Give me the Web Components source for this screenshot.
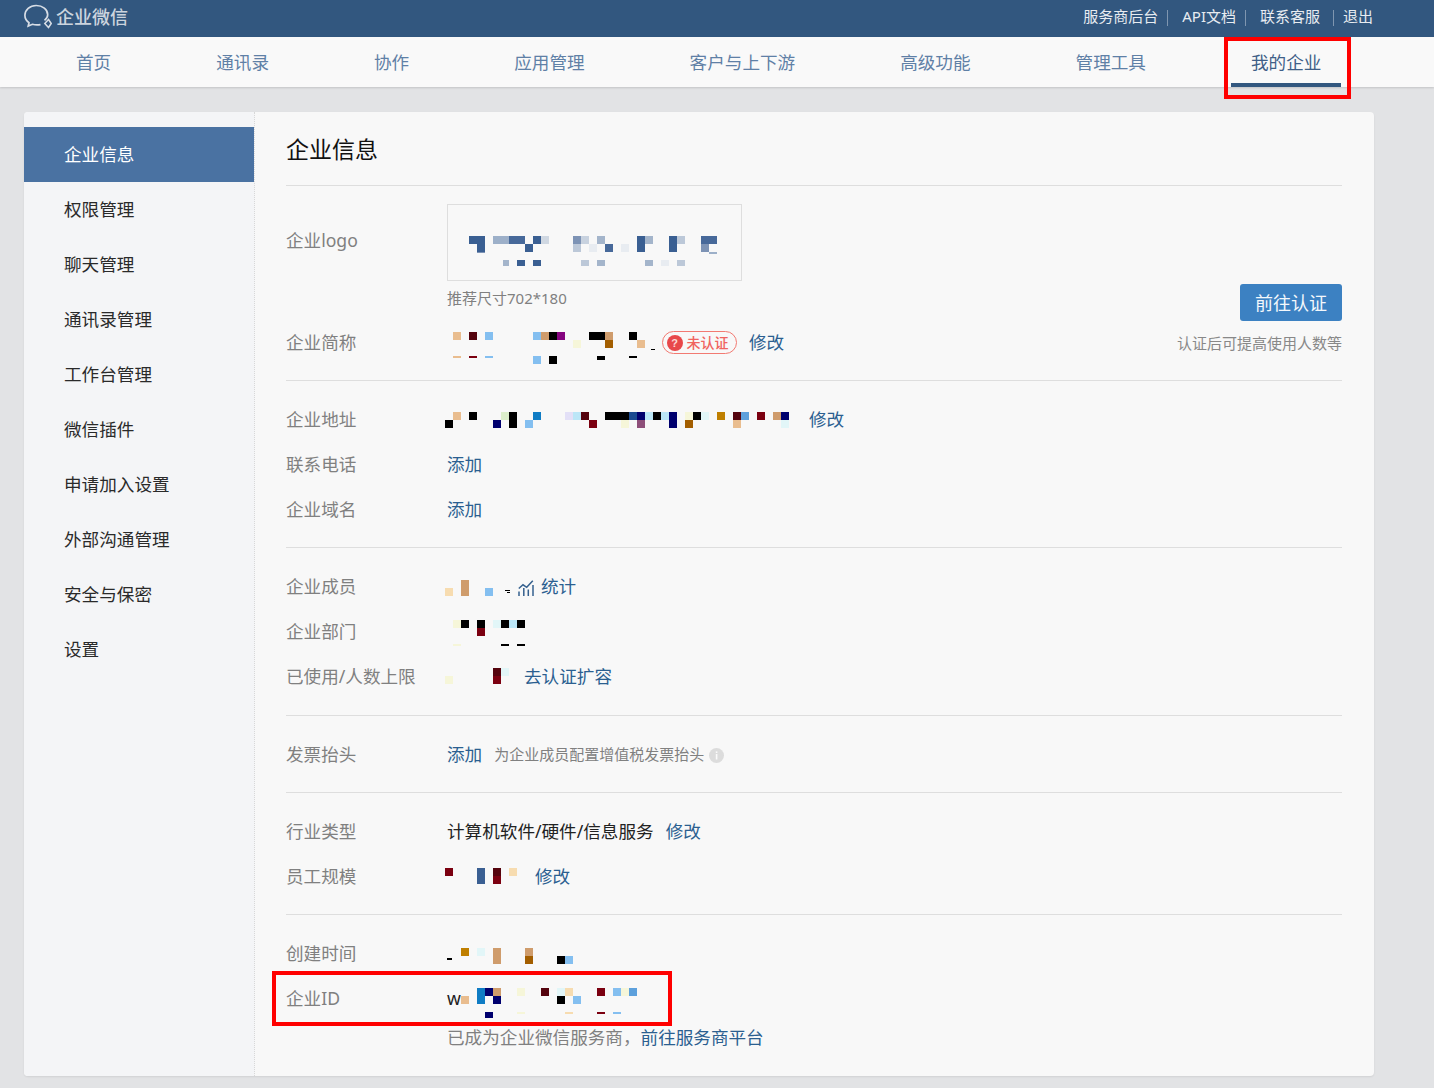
<!DOCTYPE html>
<html lang="zh">
<head>
<meta charset="utf-8">
<title>企业信息</title>
<style>
html,body{margin:0;padding:0}
body{background:#e2e3e5;font-family:"Noto Sans","Noto Sans CJK SC",sans-serif;font-size:17.6px;color:#222;width:1434px;height:1088px;overflow:hidden}
</style>
</head>
<body>
<wx-topbar>
  <span slot="links">服务商后台</span><wx-sep slot="links"></wx-sep>
  <span slot="links">API文档</span><wx-sep slot="links"></wx-sep>
  <span slot="links">联系客服</span><wx-sep slot="links" last></wx-sep>
  <span slot="links">退出</span>
</wx-topbar>
<wx-nav>
  <wx-nav-item>首页</wx-nav-item>
  <wx-nav-item>通讯录</wx-nav-item>
  <wx-nav-item>协作</wx-nav-item>
  <wx-nav-item>应用管理</wx-nav-item>
  <wx-nav-item>客户与上下游</wx-nav-item>
  <wx-nav-item>高级功能</wx-nav-item>
  <wx-nav-item>管理工具</wx-nav-item>
  <wx-nav-item active>我的企业<wx-red-box style="left:-7px;top:0;width:127px;height:62px"></wx-red-box></wx-nav-item>
</wx-nav>
<wx-card>
  <wx-side-item slot="side" active>企业信息</wx-side-item>
  <wx-side-item slot="side">权限管理</wx-side-item>
  <wx-side-item slot="side">聊天管理</wx-side-item>
  <wx-side-item slot="side">通讯录管理</wx-side-item>
  <wx-side-item slot="side">工作台管理</wx-side-item>
  <wx-side-item slot="side">微信插件</wx-side-item>
  <wx-side-item slot="side">申请加入设置</wx-side-item>
  <wx-side-item slot="side">外部沟通管理</wx-side-item>
  <wx-side-item slot="side">安全与保密</wx-side-item>
  <wx-side-item slot="side">设置</wx-side-item>

  <wx-title>企业信息</wx-title>

  <wx-intro>
    <wx-logo-row>
      <wx-mask w="293" h="75" ox="21" cells="0,31,S,2;3,31,G,2;5,31,D,2;8,31,S;9,31,H;13,31,E;14,31,I;16,31,F;21,31,S;22,31,F;25,31,S;26,31,J;29,31,D,2;1,39,S;7,39,S;13,39,J;15,39,K;17,39,D;19,39,K;21,39,S;25,39,S;29,39,E;30,47,G,1,2;1,47,E,1,1;4.3,55,F,.7,6;6,55,S,1,6;8,55,S,1,6;14,55,J,1,6;16,55,F,1,6;22,55,F,1,6;24,55,K,1,6;26,55,J,1,6"></wx-mask>
    </wx-logo-row>
    <wx-row label="企业简称" slot="name">
      <wx-mask w="205" cells="1,12,p;3,12,m;5,12,l;11,12,l;12,12,t;13,12,k;14,12,v;18,12,k,2;20,12,t;23,12,k;16,20,c;20,20,b;24,20,p;1,36,p,1,2;3,36,r,1,2;5,36,l,1,2;11,36,l;13,36,k;19,36,k,1,4;23,36,k,1,2;25.7,29,k,.6,1"></wx-mask>
      <wx-badge>未认证</wx-badge>
      <wx-link>修改</wx-link>
    </wx-row>
    <wx-note slot="aside">认证后可提高使用人数等</wx-note>
  </wx-intro>

  <wx-group>
    <wx-row label="企业地址">
      <wx-mask w="352" cells="1,15,p;3,15,k;7,15,g;8,15,k,1,16;11,15,B;15,15,a;16,15,L;17,15,m;20,15,k,3;23,15,N;24,15,n;25,15,L;26,15,k;27,15,L;28,15,n,1,16;30,15,c;31,15,k;32,15,C;34,15,o;36,15,m;37,15,w;39,15,r;41,15,t;42,15,n;0,23,k;6,23,n;10,23,l;18,23,r;22,23,c;24,23,u;30,23,b;36,23,p;42,23,C"></wx-mask>
      <wx-link>修改</wx-link>
    </wx-row>
    <wx-row label="联系电话"><wx-link>添加</wx-link></wx-row>
    <wx-row label="企业域名"><wx-link>添加</wx-link></wx-row>
  </wx-group>

  <wx-group style="padding-bottom:16px">
    <wx-row label="企业成员">
      <wx-mask w="61" cells="0,24,s;2,16,t,1,16;5,24,l;7.5,26,k,.6,1;7.7,28,k,.4,1"></wx-mask>
      <wx-chart-icon></wx-chart-icon>
      <wx-link style="margin-left:-5px">统计</wx-link>
    </wx-row>
    <wx-row label="企业部门">
      <wx-mask w="80" cells="1,11,c;2,11,k;4,11,k;4,19,r;6,11,C;7,11,k;8,11,L;9,11,k;1,35,c,1,2;7,35,k,1,2;9,35,k,1,2"></wx-mask>
    </wx-row>
    <wx-row label="已使用/人数上限">
      <wx-mask w="67" cells="0,22,c;6,14,m;6,22,r;7,14,C"></wx-mask>
      <wx-link>去认证扩容</wx-link>
    </wx-row>
  </wx-group>

  <wx-group>
    <wx-row label="发票抬头">
      <wx-link>添加</wx-link>
      <wx-small>为企业成员配置增值税发票抬头</wx-small>
      <wx-info-icon style="margin-left:-7px;margin-top:1px"></wx-info-icon>
    </wx-row>
  </wx-group>

  <wx-group>
    <wx-row label="行业类型">
      <span>计算机软件/硬件/信息服务</span>
      <wx-link>修改</wx-link>
    </wx-row>
    <wx-row label="员工规模">
      <wx-mask w="78" cells="0,14,r;4,14,S,1,16;6,14,m;6,22,r;8,14,s"></wx-mask>
      <wx-link>修改</wx-link>
    </wx-row>
  </wx-group>

  <wx-group last>
    <wx-row label="创建时间">
      <wx-mask w="130" cells="2,17,o;4,17,C;6,17,t;6,25,t;10,17,t;10,25,b;14,25,k;15,25,l;.3,27,k,.6,2"></wx-mask>
    </wx-row>
    <wx-row label="企业ID">
      <span style="display:block;width:14px">w</span>
      <wx-mask style="margin-left:-28px" w="200" cells="2,20,p;4,12,B,1,16;5,12,n;6,12,t;6,20,n;9,12,c;12,12,m;14,12,C;15,12,s;14,20,k;16,20,l;19,12,r;21,12,l;22,12,c;23,12,w;5,36,n,1,6;9,36,c,1,2;15,36,s,1,2;19,36,r,1,2;21,36,l,1,2"></wx-mask>
      <wx-red-box style="left:-14px;top:-5px;width:400px;height:55px"></wx-red-box>
    </wx-row>
    <wx-hint>已成为企业微信服务商，<wx-link>前往服务商平台</wx-link></wx-hint>
  </wx-group>
</wx-card>

<script>
const PAL={p:'#e9bd8f',m:'#55040e',r:'#7b0010',l:'#84bff0',t:'#cf9c6c',k:'#000000',v:'#85047f',c:'#f6f6d9',b:'#a35e00',o:'#bf7f00',B:'#0f7cc4',n:'#00006e',N:'#1a4a90',C:'#e2f6f8',L:'#bbe6f7',g:'#dceecb',a:'#e3e0f7',u:'#8e4f7a',s:'#f7dcb0',w:'#5da0dc',
 S:'#3a5f92',G:'#9db0c9',D:'#47699a',H:'#d0d8e2',E:'#7d93b5',I:'#c8d2df',F:'#a4b5cb',J:'#bcc8d8',K:'#e8ecf1'};

function simple(name,css,html){
  customElements.define(name,class extends HTMLElement{
    constructor(){super();const r=this.attachShadow({mode:'open'});r.innerHTML='<style>'+css+'</style>'+(html||'<slot></slot>');}
  });
}

simple('wx-topbar',`
  :host{display:flex;align-items:center;justify-content:space-between;height:37px;background:#32577f;box-sizing:border-box;padding:0 61px 0 24px;color:#e8ecf1;font-size:15px;line-height:37px}
  .brand{display:flex;align-items:center;gap:4px;color:#ccd4de;font-size:18px;font-weight:500;margin-top:-3px}
  svg{display:block;margin-top:-5px}
  .links{display:flex;align-items:center;margin-top:-5px}
`,`
  <div class="brand">
    <svg width="28" height="30" viewBox="0 0 28 30" fill="none" stroke="#d7dde5" stroke-width="1.7">
      <path d="M20.500 20.300C22.800 18.500 23.700 17 23.700 14.800C23.700 9.500 18.600 5.500 12.200 5.500C5.800 5.500 .9 9.700 .9 15.300C.9 18.500 2.500 21 5 22.800L4.200 26L8.400 24.300C11 25 13.500 25.100 16.500 24.600"/>
      <path d="M24.500 19.500L27.200 23.500L24.500 27.500L20.800 23.500Z" stroke-width="1.500"/>
    </svg>
    <span>企业微信</span>
  </div>
  <div class="links"><slot name="links"></slot></div>
`);
simple('wx-sep',`
  :host{display:block;width:1px;height:16px;background:#7f96b0;margin:4px 14px 0 9px}
  :host([last]){margin:4px 9px 0 13px}
`,'<span></span>');
simple('wx-nav',`
  :host{display:flex;gap:65px;height:50px;padding-left:56px;background:#f9f9f9;box-shadow:0 1px 2px rgba(0,0,0,.14);position:relative}
`);
simple('wx-nav-item',`
  :host{display:block;position:relative;box-sizing:border-box;height:50px;padding:0 20px;line-height:50px;font-size:17.6px;color:#5f80a6;white-space:nowrap}
  :host([active]){color:#3f5f87;border-bottom:4px solid #32577f}
`);
simple('wx-red-box',`
  :host{display:block;position:absolute;box-sizing:border-box;border:4px solid #f00;pointer-events:none;z-index:5}
`,'<span></span>');
simple('wx-card',`
  :host{display:flex;margin:25px 60px 0 24px;background:#f8f8f8;border-radius:4px;box-shadow:0 1px 2px rgba(0,0,0,.08);overflow:hidden}
  aside{flex:none;width:230px;box-sizing:content-box;padding-top:15px;background:#f4f5f7;border-right:1px dotted #d8d8d8}
  main{flex:1;min-width:0;padding:0 32px 23px 31px}
`,`<aside><slot name="side"></slot></aside><main><slot></slot></main>`);
simple('wx-side-item',`
  :host{display:block;height:55px;line-height:55px;padding-left:40px;font-size:17.6px;color:#2a2a2a}
  :host([active]){background:#4a72a2;color:#fff}
`);
simple('wx-title',`
  :host{display:block;padding:21px 0 20px;font-size:23px;line-height:32px;color:#111;border-bottom:1px solid #dedede}
`);
simple('wx-intro',`
  :host{display:flex;justify-content:space-between;align-items:flex-end;padding-bottom:15px;border-bottom:1px solid #dedede}
  .l{flex:1;min-width:0}
  .r{display:flex;flex-direction:column;align-items:flex-end}
  a{display:block;box-sizing:border-box;width:102px;height:37px;margin-bottom:-1px;line-height:38px;text-align:center;background:#3c81c2;color:#f4f8fc;border-radius:3px;font-size:18px}
`,`<div class="l"><slot></slot><slot name="name"></slot></div><div class="r"><a>前往认证</a><slot name="aside"></slot></div>`);
simple('wx-logo-row',`
  :host{display:flex;padding-top:18px}
  .label{width:161px;flex:none;color:#808080;font-size:17.6px;line-height:45px;margin-top:14px}
  .box{box-sizing:border-box;width:295px;height:77px;border:1px solid #dedede;display:flex}
  .hint{margin-bottom:5px;height:34px;line-height:34px;font-size:15px;color:#808080}
`,`<div class="label">企业logo</div><div><div class="box"><slot></slot></div><div class="hint">推荐尺寸702*180</div></div>`);
simple('wx-row',`
  :host{display:block;position:relative;height:45px}
  .r{display:flex;align-items:flex-start;height:45px;font-size:17.6px;color:#222}
  .label{flex:none;width:161px;color:#808080;white-space:nowrap;line-height:45px}
  .v{display:flex;align-items:center;gap:12px;height:45px;line-height:45px;white-space:nowrap}
`,`<div class="r"><div class="label"></div><div class="v"><slot></slot></div></div>`);
simple('wx-group',`
  :host{display:block;padding:16px 0 15px;border-bottom:1px solid #dedede}
  :host([last]){border-bottom:0;padding-bottom:0}
`);
simple('wx-link',`:host{display:inline;color:#2b5f90;font-size:17.6px}`);
simple('wx-note',`:host{display:block;height:45px;line-height:47px;font-size:15px;color:#888}`);
simple('wx-small',`:host{display:inline;font-size:15px;color:#808080}`);
simple('wx-hint',`:host{display:block;margin-left:161px;height:32px;line-height:32px;font-size:17.6px;color:#808080}`);
simple('wx-badge',`
  :host{display:flex;align-items:center;box-sizing:border-box;width:75px;height:23px;border:1.5px solid #f27a72;border-radius:12px;color:#f0645f;font-size:14px;line-height:20px;padding-left:3.5px;gap:4px;font-weight:500}
  i{flex:none;width:16px;height:16px;border-radius:50%;background:#e8484a;color:#fbd9d6;font:bold 11px/16px "Liberation Sans",sans-serif;text-align:center}
`,`<i>?</i><slot></slot>`);
simple('wx-chart-icon',`:host{display:block;width:16px;height:18px;margin-top:2px} svg{display:block}`,
`<svg width="16" height="18" viewBox="0 0 16 18" fill="none" stroke="#35608e" stroke-width="1.5"><path d="M.8 9.500L5 5.800L8.700 8.300L14.800 1.800"/><path d="M1 17V12.500M5.800 17V9M10.300 17V10.500M15 17V6"/></svg>`);
simple('wx-info-icon',`:host{display:block;width:15px;height:15px} svg{display:block}`,
`<svg width="15" height="15" viewBox="0 0 15 15"><circle cx="7.500" cy="7.500" r="7.500" fill="#dcdcdc"/><rect x="6.800" y="6" width="1.600" height="5.500" fill="#fafafa"/><rect x="6.800" y="3.400" width="1.600" height="1.600" fill="#fafafa"/></svg>`);

customElements.define('wx-mask',class extends HTMLElement{
  constructor(){
    super();
    this.attachShadow({mode:'open'});
  }
  connectedCallback(){
    const w=this.getAttribute('w'),h=this.getAttribute('h')||45,ox=+(this.getAttribute('ox')||0);
    const rects=(this.getAttribute('cells')||'').split(';').filter(Boolean).map(t=>{
      const [c,y,k,cw,ch]=t.split(',');
      return `<rect x="${ox+c*8}" y="${y}" width="${(cw===undefined?1:+cw)*8}" height="${ch||8}" fill="${PAL[k]}"/>`;
    }).join('');
    this.shadowRoot.innerHTML=`<style>:host{display:block;flex:none;align-self:flex-start;margin-left:${this.hasAttribute('ox')?0:-2}px;height:${h}px}svg{display:block;overflow:visible}</style>
      <svg width="${w}" height="${h}" shape-rendering="crispEdges">${rects}</svg>`;
  }
});

document.querySelectorAll('wx-row').forEach(r=>{
  r.shadowRoot.querySelector('.label').textContent=r.getAttribute('label');
});
</script>
</body>
</html>
